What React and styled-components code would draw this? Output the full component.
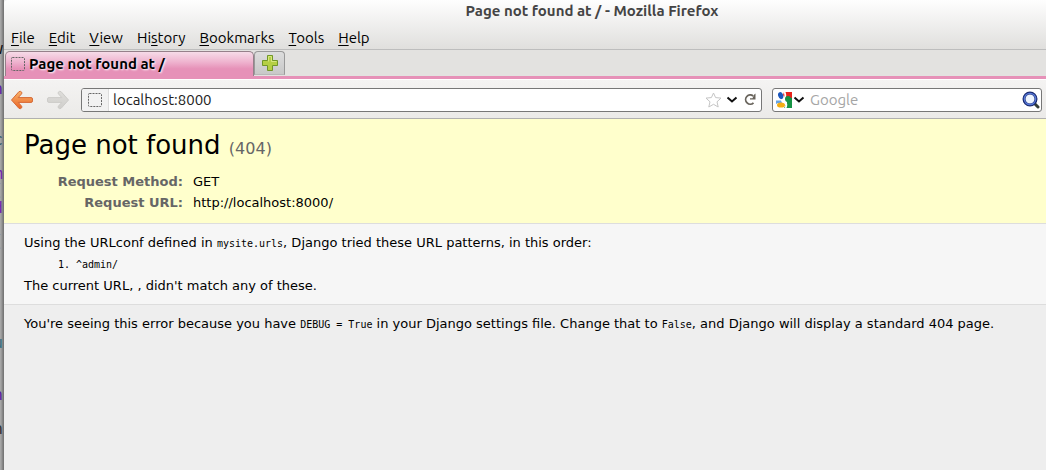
import React from 'react';
import styled, { createGlobalStyle, css } from 'styled-components';

const ui = '"Ubuntu", "Noto Sans", sans-serif';
const sans = '"DejaVu Sans", sans-serif';
const mono = '"DejaVu Sans Mono", monospace';

const GlobalStyle = createGlobalStyle`
  * { box-sizing: border-box; }
  body { margin: 0; background: #eee; }
  button, input { font: inherit; }
`;

const Desktop = styled.div`
  display: flex;
  min-height: 100vh;
`;

const Backdrop = styled.div`
  flex: none;
  width: 4px;
  overflow: hidden;
  background: linear-gradient(90deg, #a6a6a6 0 1px, #999 1px 2px, #868686 2px 3px, #777 3px);
`;

const Fragment = styled.div`
  display: flex;
  justify-content: flex-end;
  width: 3px;
  height: 16px;
  margin-top: ${(p) => p.$gap}px;
  color: ${(p) => p.$color};
  font: 16px/16px ${mono};
  overflow: hidden;
`;

const Window = styled.div`
  flex: 1;
  min-width: 0;
  display: flex;
  flex-direction: column;
  font-family: ${ui};
`;

const Header = styled.header`
  background: linear-gradient(#fefefe, #e0dfdd);
  border-bottom: 1px solid #bdbdbd;
  border-top-left-radius: 4px;
`;

const TitleBar = styled.div`
  height: 24px;
  padding-right: 8px;
  padding-left: 142px;
  text-align: center;
  font-size: 15px;
  font-weight: 700;
  line-height: 22px;
  color: #444;
`;

const MenuBar = styled.nav`
  display: flex;
  gap: 14px;
  height: 25px;
  padding: 0 7px;
`;

const MenuItem = styled.button`
  padding: 0;
  border: 0;
  background: none;
  color: #000;
  font-size: 15px;
  line-height: 28px;
  u { text-underline-offset: 2px; }
`;

const TabStrip = styled.div`
  display: flex;
  align-items: flex-end;
  height: 29px;
  padding: 1px 1px 0;
  background: #e3e2e0;
  border-bottom: 3px solid #e691b8;
`;

const Tab = styled.button`
  display: flex;
  align-items: center;
  gap: 4px;
  width: 249px;
  height: 25px;
  padding: 0 5px;
  border: 1px solid #96808a;
  border-bottom: 0;
  border-radius: 5px 5px 0 0;
  background: linear-gradient(#f6dbe8, #efb5d0 40%, #e691b8 70%);
  color: #000;
  font-size: 15px;
  font-weight: 700;
  line-height: 24px;
  text-shadow: 1px 1px 2px #fff;
`;

const NewTab = styled.button`
  display: flex;
  align-items: center;
  justify-content: center;
  width: 31px;
  height: 24px;
  margin: 0 0 1px;
  padding: 0;
  border: 1px solid #999;
  border-bottom: 1px solid #b8b8b8;
  border-radius: 4px 4px 0 0;
  background: linear-gradient(#ddd, #c8c8c8);
`;

const Toolbar = styled.div`
  display: flex;
  align-items: center;
  gap: 10px;
  height: 40px;
  padding: 1px 4px 0 6px;
  background: linear-gradient(#f4f3f2, #ebeae8);
  border-top: 1px solid #fff;
  border-bottom: 1px solid #b0b0b0;
`;

const NavButtons = styled.div`
  display: flex;
  gap: 12px;
  width: 61px;
`;

const IconButton = styled.button`
  display: flex;
  align-items: center;
  gap: 1px;
  padding: 0;
  border: 0;
  background: none;
`;

const Field = styled.label`
  display: flex;
  align-items: center;
  height: 24px;
  border: 1px solid #777;
  border-radius: 3px;
  background: #fff;
  overflow: hidden;
  ${(p) => p.$search ? css`
    flex: none;
    width: 270px;
    padding: 0 1px 0 3px;
  ` : css`
    flex: 1;
    min-width: 0;
    padding-right: 4px;
  `}
`;

const FieldActions = styled.span`
  display: flex;
  align-items: center;
  gap: 4px;
  button:last-child { margin-left: 2px; }
`;

const Identity = styled.span`
  display: flex;
  align-items: center;
  justify-content: center;
  flex: none;
  width: 27px;
  height: 22px;
  border-right: 1px solid #ddd;
  background: #f2f2f2;
`;

const TextInput = styled.input`
  flex: 1;
  min-width: 0;
  height: 22px;
  padding: 0 0 0 ${(p) => p.$inset}px;
  border: 0;
  outline: 0;
  background: none;
  color: #222;
  font-size: 15px;
  &::placeholder { color: #a5a5a5; opacity: 1; }
`;

const Page = styled.main`
  flex: 1;
  background: #eee;
  color: #000;
  font: 13px/17px ${sans};
`;

const Section = styled.section`
  padding: 10px 20px;
  background: ${(p) => p.$fill};
  border-bottom: ${(p) => (p.$last ? '0' : '1px solid #ddd')};
`;

const Heading = styled.h1`
  margin: 0 0 6px;
  font-size: 26px;
  font-weight: 400;
  line-height: 33px;
  span { font-size: 16px; color: #666; }
`;

const Details = styled.table`
  border-collapse: collapse;
  th, td { height: 21px; padding: 2px 3px; vertical-align: top; }
  th { width: 162px; text-align: right; color: #666; }
  td { padding-left: 7px; }
`;

const Text = styled.p`
  margin: 0;
  code { font: 10px/12px ${mono}; }
`;

const Patterns = styled.ol`
  margin: 6px 0 4px;
  padding-left: 52px;
  font: 10px/16px ${mono};
`;

const Favicon = () => (
  <svg width="14" height="14" viewBox="0 0 14 14" fill="none" aria-hidden="true">
    <rect x=".5" y=".5" width="13" height="13" rx="1" stroke="#666" strokeDasharray="2 1" />
  </svg>
);

const Arrow = ({ id, light, dark, edge, flip }) => (
  <svg width="24" height="20" viewBox="0 0 24 20" aria-hidden="true">
    <defs>
      <linearGradient id={id} x1="0" y1="0" x2="0" y2="1">
        <stop offset="0" stopColor={light} />
        <stop offset="1" stopColor={dark} />
      </linearGradient>
    </defs>
    <path
      transform={flip ? 'translate(24 0) scale(-1 1)' : undefined}
      d="M1.5 10 9 1.6Q10.5 .8 11.7 2.2 12.3 3.2 11.3 4.2L8.2 7.6H21Q22.5 7.6 22.5 9V10.9Q22.5 12.4 21 12.4H8.2L11.3 15.8Q12.3 16.8 11.7 17.8 10.5 19.2 9 18.4Z"
      fill={`url(#${id})`} stroke={edge} strokeLinejoin="round"
    />
  </svg>
);

const Chevron = () => (
  <svg width="12" height="8" viewBox="0 0 12 8" fill="none" aria-hidden="true">
    <path d="M1.5 1.5 6 5.5 10.5 1.5" stroke="#111" strokeWidth="2" />
  </svg>
);

const Star = () => (
  <svg width="17" height="16" viewBox="0 0 17 16" aria-hidden="true">
    <path d="M8.5 1 10.6 5.6 16 6.1 12 9.8 13.2 15 8.5 12.3 3.8 15 5 9.8 1 6.1 6.4 5.6Z" fill="#fff" stroke="#c4c4c4" strokeLinejoin="round" />
  </svg>
);

const Reload = () => (
  <svg width="13" height="13" viewBox="0 0 13 13" fill="none" aria-hidden="true">
    <path d="M9.5 9.8A4.6 4.6 0 1 1 9.2 3" stroke="#69645c" strokeWidth="1.8" />
    <path d="M11.5.5V6.5H6V5.3H8.5L10 1.8Z" fill="#69645c" />
  </svg>
);

const GoogleMark = () => (
  <svg width="16" height="16" viewBox="0 0 16 16" aria-hidden="true">
    <path d="M8 0H16V7H10L7 3Z" fill="#e8221b" />
    <path d="M10 6H16V16H8L11 11Z" fill="#159344" />
    <path d="M0 8.5H5L6 11 2 11 0 12Z" fill="#65a3e5" />
    <ellipse cx="4.7" cy="3.6" rx="2.5" ry="3.6" transform="rotate(-18 4.7 3.6)" fill="#1b56bd" />
    <ellipse cx="5" cy="13" rx="4" ry="2.6" fill="#f3ad13" />
    <path d="M8.5 0Q10.5 4.5 7.8 7.2 7.5 8.6 9 9.6 11.5 12 9.5 16" fill="none" stroke="#fff" strokeWidth="1.8" />
    <circle cx="12" cy="7" r="3" fill="#159344" />
  </svg>
);

const Magnifier = () => (
  <svg width="18" height="18" viewBox="0 0 18 18" fill="none" aria-hidden="true">
    <path d="M12 12 16 16" stroke="#333c36" strokeWidth="3" strokeLinecap="round" />
    <circle cx="8" cy="8" r="6" fill="#edf4ff" stroke="#1b2c72" strokeWidth="3" />
    <circle cx="8" cy="8" r="5.7" stroke="#5678d8" strokeWidth="1.2" />
  </svg>
);

const Plus = () => (
  <svg width="18" height="18" viewBox="0 0 18 18" aria-hidden="true">
    <path d="M6.5 1.5H11.5V6.5H16.5V11.5H11.5V16.5H6.5V11.5H1.5V6.5H6.5Z" fill="#b5cf43" stroke="#719727" strokeLinejoin="round" />
    <path d="M7.5 7.5V2.5H10.5V7.5H15.5" fill="none" stroke="#d5e77c" />
  </svg>
);

const menus = [['', 'F', 'ile'], ['', 'E', 'dit'], ['', 'V', 'iew'], ['Hi', 's', 'tory'], ['', 'B', 'ookmarks'], ['', 'T', 'ools'], ['', 'H', 'elp']];

const fragments = [
  { gap: 41, color: '#111', text: 'w' },
  { gap: 24, color: '#5a1ca8', text: 'n' },
  { gap: 35, color: '#2a5262', text: 'c' },
  { gap: 18, color: '#7424b4', text: 'm' },
  { gap: 0, color: '#7424b4', text: '(' },
  { gap: 2, color: '#7424b4', text: 'd' },
  { gap: 17, color: '#6425b4', text: '(' },
  { gap: 86, color: '#387083', text: 'u' },
  { gap: 36, color: '#5a1ca8', text: 'n' },
  { gap: 18, color: '#333', text: 'n' },
];

export default function App() {
  return (
    <>
      <GlobalStyle />
      <Desktop>
        <Backdrop aria-hidden="true">
          {fragments.map((f, i) => (
            <Fragment key={i} $gap={f.gap} $color={f.color}>{f.text}</Fragment>
          ))}
        </Backdrop>
        <Window>
          <Header>
            <TitleBar>Page not found at / - Mozilla Firefox</TitleBar>
            <MenuBar>
              {menus.map(([before, key, after]) => (
                <MenuItem key={key + after}>{before}<u>{key}</u>{after}</MenuItem>
              ))}
            </MenuBar>
          </Header>
          <TabStrip>
            <Tab><Favicon />Page not found at /</Tab>
            <NewTab aria-label="Open a new tab"><Plus /></NewTab>
          </TabStrip>
          <Toolbar>
            <NavButtons>
              <IconButton aria-label="Back"><Arrow id="back" light="#f9b46c" dark="#e96526" edge="#d66a37" /></IconButton>
              <IconButton aria-label="Forward"><Arrow id="forward" light="#deddda" dark="#d0cfcc" edge="#cdccc9" flip /></IconButton>
            </NavButtons>
            <Field>
              <Identity><Favicon /></Identity>
              <TextInput aria-label="Address" defaultValue="localhost:8000" $inset={4} />
              <FieldActions>
                <IconButton aria-label="Bookmark this page"><Star /></IconButton>
                <IconButton aria-label="Show history"><Chevron /></IconButton>
                <IconButton aria-label="Reload"><Reload /></IconButton>
              </FieldActions>
            </Field>
            <Field $search>
              <IconButton aria-label="Choose search engine"><GoogleMark /><Chevron /></IconButton>
              <TextInput aria-label="Search" placeholder="Google" $inset={5} />
              <IconButton aria-label="Run search"><Magnifier /></IconButton>
            </Field>
          </Toolbar>
          <Page>
            <Section $fill="#ffffcc">
              <Heading>Page not found <span>(404)</span></Heading>
              <Details>
                <tbody>
                  <tr><th scope="row">Request Method:</th><td>GET</td></tr>
                  <tr><th scope="row">Request URL:</th><td>http://localhost:8000/</td></tr>
                </tbody>
              </Details>
            </Section>
            <Section $fill="#f6f6f6">
              <Text>Using the URLconf defined in <code>mysite.urls</code>, Django tried these URL patterns, in this order:</Text>
              <Patterns><li>^admin/</li></Patterns>
              <Text>The current URL, , didn't match any of these.</Text>
            </Section>
            <Section $fill="#eee" $last>
              <Text>You're seeing this error because you have <code>DEBUG = True</code> in your Django settings file. Change that to <code>False</code>, and Django will display a standard 404 page.</Text>
            </Section>
          </Page>
        </Window>
      </Desktop>
    </>
  );
}
